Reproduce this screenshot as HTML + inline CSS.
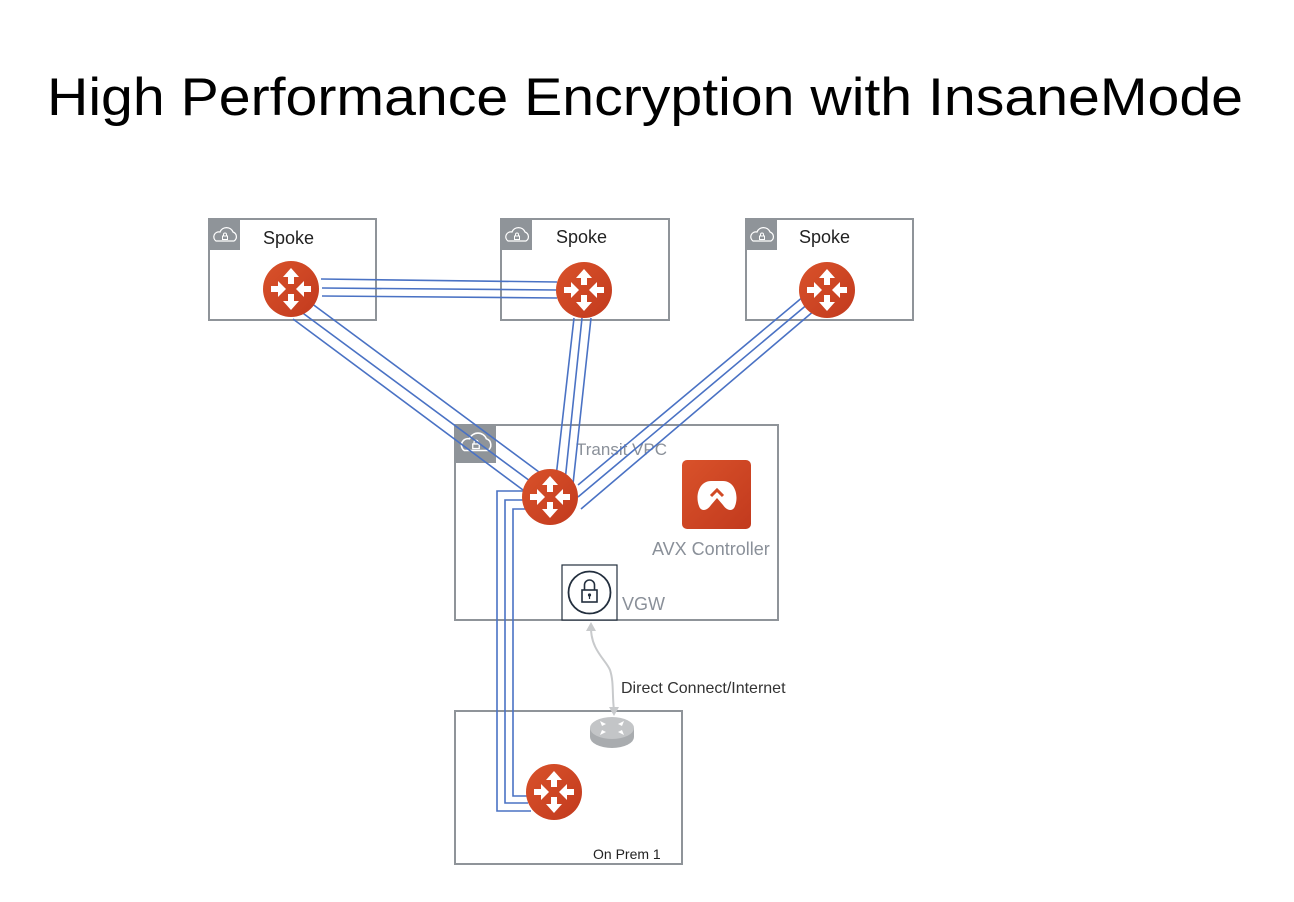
<!DOCTYPE html>
<html><head><meta charset="utf-8"><style>
html,body{margin:0;padding:0;background:#fff}
svg{display:block}
</style></head><body>
<svg width="1294" height="902" viewBox="0 0 1294 902" xmlns="http://www.w3.org/2000/svg">
<defs>
<linearGradient id="rg" x1="0" y1="0" x2="1" y2="1">
<stop offset="0" stop-color="#d9522a"/><stop offset="1" stop-color="#c23a1e"/>
</linearGradient>
<g id="router">
<circle r="28" fill="url(#rg)"/>
<g fill="#fff">
<path d="M0,-21 L-8,-12 L-3,-12 L-3,-5 L3,-5 L3,-12 L8,-12Z"/>
<path d="M0,21 L-8,12 L-3,12 L-3,5 L3,5 L3,12 L8,12Z"/>
<path d="M-5,0 L-13,-8 L-13,-3 L-20,-3 L-20,3 L-13,3 L-13,8Z"/>
<path d="M5,0 L13,-8 L13,-3 L20,-3 L20,3 L13,3 L13,8Z"/>
</g>
</g>
<g id="cloud">
<path d="M-9,5 H9 A5,5 0 0 0 8,-4 A7,7 0 0 0 -5,-4 A5,5 0 0 0 -9,5Z" fill="none" stroke="#fff" stroke-width="1.2"/>
<rect x="-2.5" y="0" width="5" height="3.5" fill="none" stroke="#fff" stroke-width="1"/>
<path d="M-1.5,0 V-1.5 A1.5,1.5 0 0 1 1.5,-1.5 V0" fill="none" stroke="#fff" stroke-width="1"/>
</g>
</defs>

<text x="47" y="115" font-family="'Liberation Sans',sans-serif" font-size="53" textLength="1196" lengthAdjust="spacingAndGlyphs" fill="#000">High Performance Encryption with InsaneMode</text>

<g fill="none" stroke="#8f9499" stroke-width="2">
<rect x="209" y="219" width="167" height="101"/>
<rect x="501" y="219" width="168" height="101"/>
<rect x="746" y="219" width="167" height="101"/>
<rect x="455" y="425" width="323" height="195"/>
<rect x="455" y="711" width="227" height="153"/>
</g>
<g fill="#8f9499">
<rect x="209" y="219" width="31" height="31"/>
<rect x="501" y="219" width="31" height="31"/>
<rect x="746" y="219" width="31" height="31"/>
<rect x="455" y="425" width="41" height="38"/>
</g>
<use href="#cloud" x="225" y="236"/>
<use href="#cloud" x="517" y="236"/>
<use href="#cloud" x="762" y="236"/>
<use href="#cloud" x="476" y="444" transform="translate(476 444) scale(1.3) translate(-476 -444)"/>

<g font-family="'Liberation Sans',sans-serif" font-size="18" fill="#222">
<text x="263" y="244">Spoke</text>
<text x="556" y="243">Spoke</text>
<text x="799" y="243">Spoke</text>
</g>
<text x="576" y="455" font-family="'Liberation Sans',sans-serif" font-size="17" fill="#8a9099">Transit VPC</text>
<text x="652" y="555" font-family="'Liberation Sans',sans-serif" font-size="18" fill="#8a9099">AVX Controller</text>
<text x="622" y="610" font-family="'Liberation Sans',sans-serif" font-size="18" fill="#8a9099">VGW</text>
<text x="621" y="693" font-family="'Liberation Sans',sans-serif" font-size="16" fill="#333">Direct Connect/Internet</text>
<text x="593" y="859" font-family="'Liberation Sans',sans-serif" font-size="14" fill="#222">On Prem 1</text>

<g fill="none" stroke="#4a72c4" stroke-width="1.6">
<path d="M321,279 L557,282 M322,288 L556,290 M322,296 L557,298"/>
<path d="M293,319 L523,490 M300,311 L530,481 M311,303 L539,472"/>
<path d="M574,318 L556,477 M582,318 L565,481 M591,318 L573,484"/>
<path d="M804,296 L578,485 M809,303 L578,497 M815,310 L581,509"/>
<path d="M527,491 L497,491 L497,811 L531,811"/>
<path d="M525,500 L505,500 L505,803 L528,803"/>
<path d="M527,509 L513,509 L513,796 L529,796"/>
</g>

<use href="#router" x="291" y="289"/>
<use href="#router" x="584" y="290"/>
<use href="#router" x="827" y="290"/>
<use href="#router" x="550" y="497"/>
<use href="#router" x="554" y="792"/>

<rect x="682" y="460" width="69" height="69" rx="5" fill="url(#rg)"/>
<path d="M699,506 C695,496 699,481 711,481 H723 C735,481 739,496 735,506 C733,512 727,511 723,505 L717,498 L711,505 C707,511 701,512 699,506Z" fill="#fff"/>
<path d="M711,496 L717,490 L723,496" fill="none" stroke="#d14a26" stroke-width="3"/>

<rect x="562" y="565" width="55" height="55" fill="#fff" stroke="#232f3e" stroke-width="1.2"/>
<circle cx="589.5" cy="592.5" r="21" fill="none" stroke="#232f3e" stroke-width="1.8"/>
<rect x="582" y="590" width="15" height="12" fill="none" stroke="#232f3e" stroke-width="1.6"/>
<path d="M584.5,590 V585 A5,5 0 0 1 594.5,585 V590" fill="none" stroke="#232f3e" stroke-width="1.6"/>
<circle cx="589.5" cy="595" r="1.6" fill="#232f3e"/>
<line x1="589.5" y1="596" x2="589.5" y2="599" stroke="#232f3e" stroke-width="1.2"/>

<path d="M591,628 C591,650 606,660 610,670 C614,682 612,695 614,710" fill="none" stroke="#c8cacc" stroke-width="2"/>
<path d="M591,622 L586,631 L596,631Z" fill="#c8cacc"/>
<path d="M614,716 L609,707 L619,707Z" fill="#c8cacc"/>

<path d="M590,728 V737 A22,11 0 0 0 634,737 V728Z" fill="#a9acaf"/>
<ellipse cx="612" cy="728" rx="22" ry="11" fill="#c3c5c7"/>
<g fill="#fff">
<path d="M606,724 L600,721 L602,726Z"/><path d="M618,724 L624,721 L622,726Z"/>
<path d="M606,732 L600,735 L602,730Z"/><path d="M618,732 L624,735 L622,730Z"/>
</g>
</svg>
</body></html>
